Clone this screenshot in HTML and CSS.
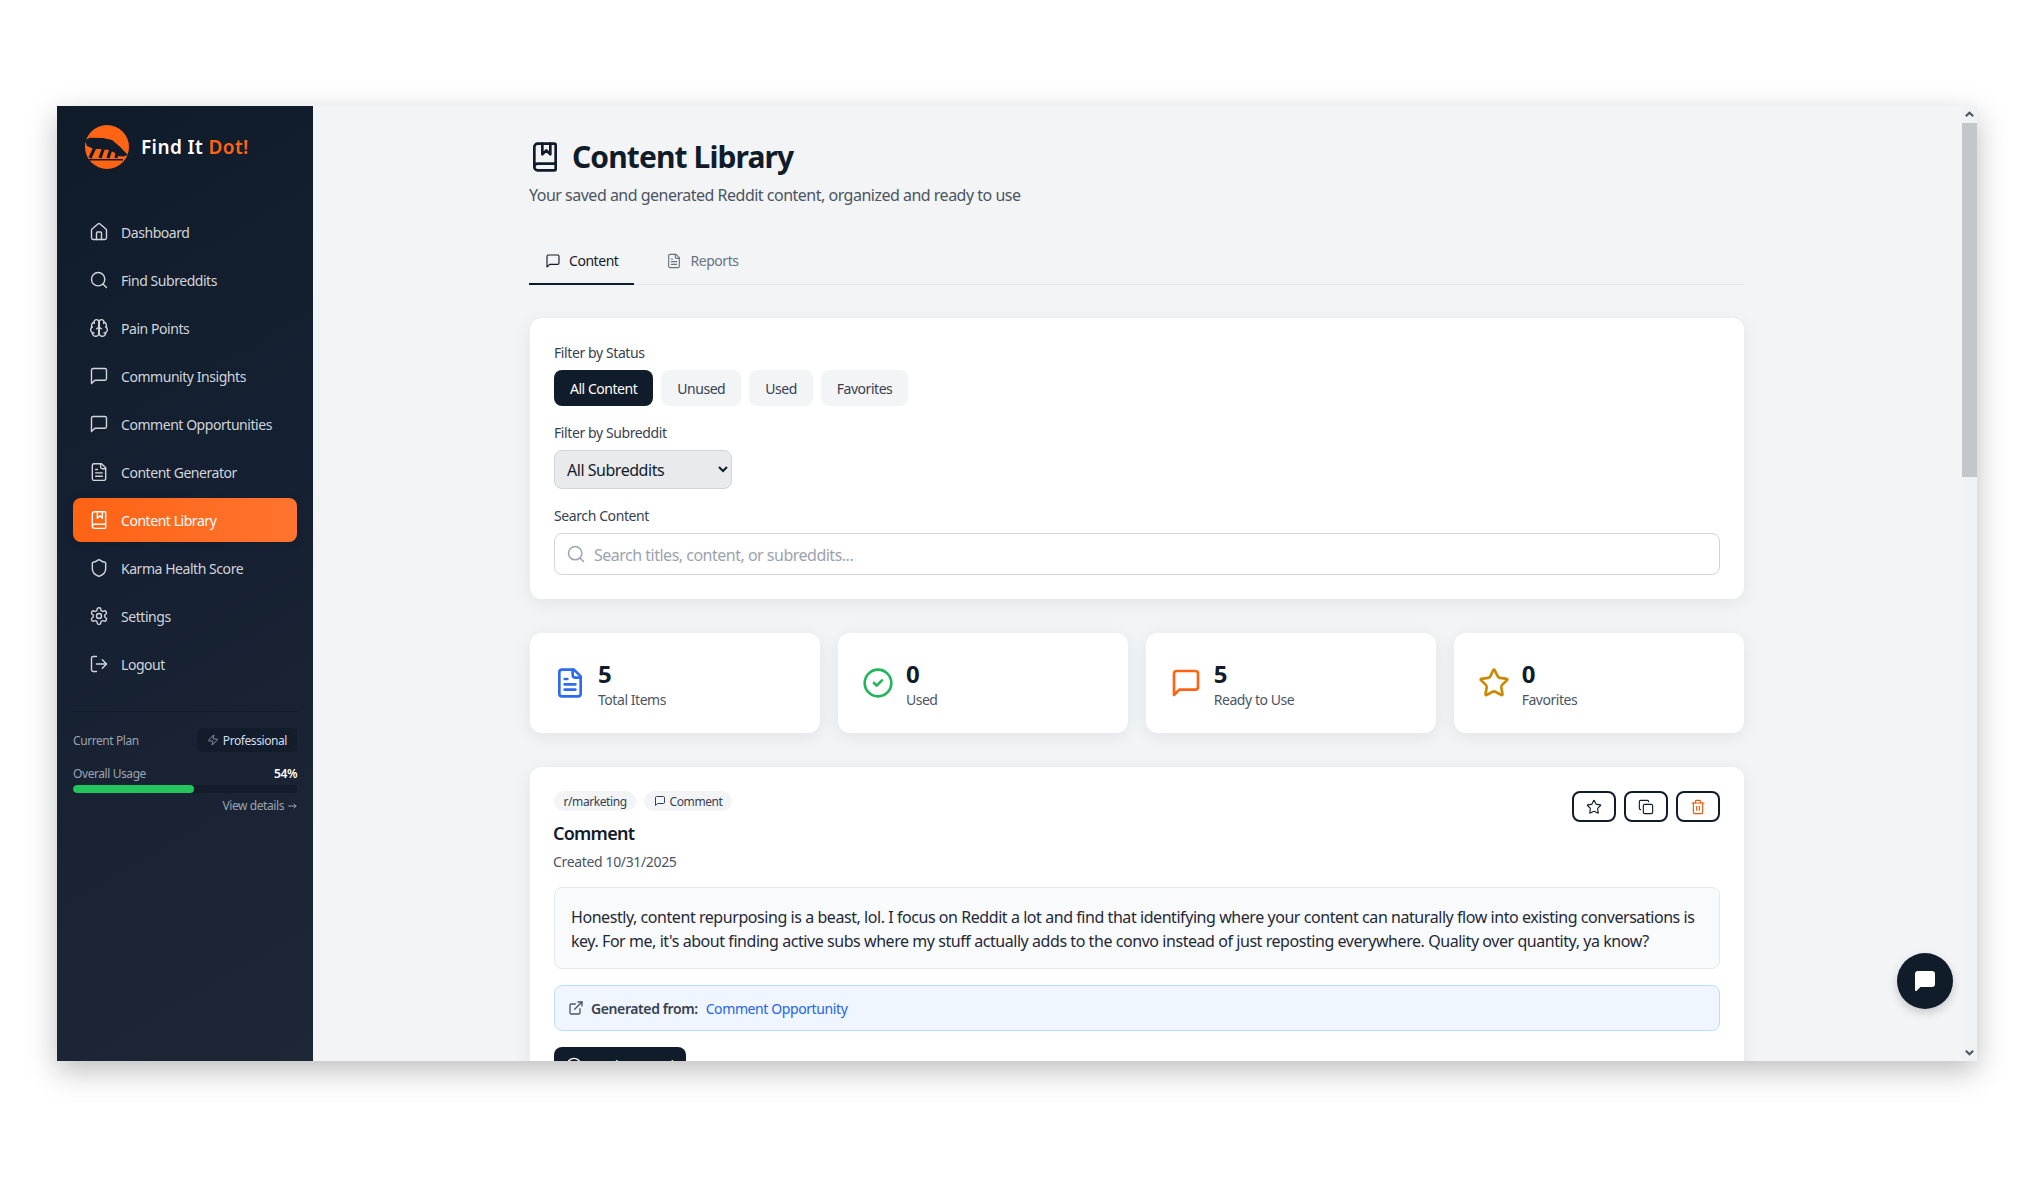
FILE: index.html
```html
<!DOCTYPE html>
<html lang="en">
<head>
    <meta charset="UTF-8">
    <title>Content Library - Find It Dot!</title>
    <link rel="stylesheet" href="styles.css">
</head>
<body>
    <!-- icon sprite -->
    <svg class="sprite" xmlns="http://www.w3.org/2000/svg">
        <symbol id="i-home" viewBox="0 0 24 24"><path d="M15 21v-8a1 1 0 0 0-1-1h-4a1 1 0 0 0-1 1v8"/><path d="M3 10a2 2 0 0 1 .709-1.528l7-5.999a2 2 0 0 1 2.582 0l7 5.999A2 2 0 0 1 21 10v9a2 2 0 0 1-2 2H5a2 2 0 0 1-2-2z"/></symbol>
        <symbol id="i-search" viewBox="0 0 24 24"><circle cx="11" cy="11" r="8"/><path d="m21 21-4.3-4.3"/></symbol>
        <symbol id="i-brain" viewBox="0 0 24 24"><path d="M12 5a3 3 0 1 0-5.997.125 4 4 0 0 0-2.526 5.77 4 4 0 0 0 .556 6.588A4 4 0 1 0 12 18Z"/><path d="M12 5a3 3 0 1 1 5.997.125 4 4 0 0 1 2.526 5.77 4 4 0 0 1-.556 6.588A4 4 0 1 1 12 18Z"/><path d="M15 13a4.5 4.5 0 0 1-3-4 4.5 4.5 0 0 1-3 4"/><path d="M17.599 6.5a3 3 0 0 0 .399-1.375"/><path d="M6.003 5.125A3 3 0 0 0 6.401 6.5"/><path d="M3.477 10.896a4 4 0 0 1 .585-.396"/><path d="M19.938 10.5a4 4 0 0 1 .585.396"/><path d="M6 18a4 4 0 0 1-1.967-.516"/><path d="M19.967 17.484A4 4 0 0 1 18 18"/><path d="M12 18V5"/></symbol>
        <symbol id="i-message" viewBox="0 0 24 24"><path d="M21 15a2 2 0 0 1-2 2H7l-4 4V5a2 2 0 0 1 2-2h14a2 2 0 0 1 2 2z"/></symbol>
        <symbol id="i-file" viewBox="0 0 24 24"><path d="M15 2H6a2 2 0 0 0-2 2v16a2 2 0 0 0 2 2h12a2 2 0 0 0 2-2V7Z"/><path d="M14 2v4a2 2 0 0 0 2 2h4"/><path d="M10 9H8"/><path d="M16 13H8"/><path d="M16 17H8"/></symbol>
        <symbol id="i-book" viewBox="0 0 24 24"><path d="M10 2v8l3-3 3 3V2"/><path d="M4 19.5v-15A2.5 2.5 0 0 1 6.5 2H19a1 1 0 0 1 1 1v18a1 1 0 0 1-1 1H6.5a1 1 0 0 1 0-5H20"/></symbol>
        <symbol id="i-shield" viewBox="0 0 24 24"><path d="M20 13c0 5-3.5 7.5-7.66 8.95a1 1 0 0 1-.67-.01C7.5 20.5 4 18 4 13V6a1 1 0 0 1 1-1c2 0 4.5-1.2 6.24-2.72a1.17 1.17 0 0 1 1.52 0C14.51 3.81 17 5 19 5a1 1 0 0 1 1 1z"/></symbol>
        <symbol id="i-settings" viewBox="0 0 24 24"><path d="M12.22 2h-.44a2 2 0 0 0-2 2v.18a2 2 0 0 1-1 1.73l-.43.25a2 2 0 0 1-2 0l-.15-.08a2 2 0 0 0-2.73.73l-.22.38a2 2 0 0 0 .73 2.73l.15.1a2 2 0 0 1 1 1.72v.51a2 2 0 0 1-1 1.74l-.15.09a2 2 0 0 0-.73 2.73l.22.38a2 2 0 0 0 2.73.73l.15-.08a2 2 0 0 1 2 0l.43.25a2 2 0 0 1 1 1.73V20a2 2 0 0 0 2 2h.44a2 2 0 0 0 2-2v-.18a2 2 0 0 1 1-1.73l.43-.25a2 2 0 0 1 2 0l.15.08a2 2 0 0 0 2.73-.73l.22-.39a2 2 0 0 0-.73-2.73l-.15-.08a2 2 0 0 1-1-1.74v-.5a2 2 0 0 1 1-1.74l.15-.09a2 2 0 0 0 .73-2.73l-.22-.38a2 2 0 0 0-2.73-.73l-.15.08a2 2 0 0 1-2 0l-.43-.25a2 2 0 0 1-1-1.73V4a2 2 0 0 0-2-2z"/><circle cx="12" cy="12" r="3"/></symbol>
        <symbol id="i-logout" viewBox="0 0 24 24"><path d="M9 21H5a2 2 0 0 1-2-2V5a2 2 0 0 1 2-2h4"/><path d="m16 17 5-5-5-5"/><path d="M21 12H9"/></symbol>
        <symbol id="i-zap" viewBox="0 0 24 24"><path d="M4 14a1 1 0 0 1-.78-1.63l9.9-10.2a.5.5 0 0 1 .86.46l-1.92 6.02A1 1 0 0 0 13 10h7a1 1 0 0 1 .78 1.63l-9.9 10.2a.5.5 0 0 1-.86-.46l1.92-6.02A1 1 0 0 0 11 14z"/></symbol>
        <symbol id="i-check" viewBox="0 0 24 24"><circle cx="12" cy="12" r="10"/><path d="m9 12 2 2 4-4"/></symbol>
        <symbol id="i-star" viewBox="0 0 24 24"><path d="M11.525 2.295a.53.53 0 0 1 .95 0l2.31 4.679a2.123 2.123 0 0 0 1.595 1.16l5.166.756a.53.53 0 0 1 .294.904l-3.736 3.638a2.123 2.123 0 0 0-.611 1.878l.882 5.14a.53.53 0 0 1-.771.56l-4.618-2.428a2.122 2.122 0 0 0-1.973 0L6.396 21.01a.53.53 0 0 1-.77-.56l.881-5.139a2.122 2.122 0 0 0-.611-1.879L2.16 9.795a.53.53 0 0 1 .294-.906l5.165-.755a2.122 2.122 0 0 0 1.597-1.16z"/></symbol>
        <symbol id="i-copy" viewBox="0 0 24 24"><rect x="8" y="8" width="14" height="14" rx="2"/><path d="M4 16c-1.1 0-2-.9-2-2V4c0-1.1.9-2 2-2h10c1.1 0 2 .9 2 2"/></symbol>
        <symbol id="i-trash" viewBox="0 0 24 24"><path d="M3 6h18"/><path d="M19 6v14c0 1-1 2-2 2H7c-1 0-2-1-2-2V6"/><path d="M8 6V4c0-1 1-2 2-2h4c1 0 2 1 2 2v2"/><path d="M10 11v6"/><path d="M14 11v6"/></symbol>
        <symbol id="i-external" viewBox="0 0 24 24"><path d="M15 3h6v6"/><path d="M10 14 21 3"/><path d="M18 13v6a2 2 0 0 1-2 2H5a2 2 0 0 1-2-2V8a2 2 0 0 1 2-2h6"/></symbol>
        <symbol id="i-arrow" viewBox="0 0 9 8"><path d="M0.500 4H8M6 2l2 2-2 2"/></symbol>
    </svg>

    <div class="window">
        <!-- sidebar -->
        <aside class="sidebar">
            <div class="brand">
                <svg class="brand-logo" viewBox="0 0 44 44">
                    <circle cx="22" cy="22" r="22" fill="#ff6314"/>
                    <path fill="#111c2b" d="M0 15 L5 12.700 L18 13 L27 15 L35 21.700 L38 25 L43 30 L38 31.500 L33 31 L30 28 L24 25 L15 24 L9 24 L2 21 Z"/>
                    <path fill="none" stroke="#111c2b" stroke-width="3.200" d="M11 20 L5 33 M19 22 L15 33 M26 24 L23 33 M32 27 L31 33"/>
                    <path fill="#111c2b" d="M4 34 H38 V35.500 H4 Z"/>
                </svg>
                <span class="brand-name">Find It <em>Dot!</em></span>
            </div>

            <nav class="menu">
                <a href="#" class="menu-item"><svg class="icon"><use href="#i-home"/></svg>Dashboard</a>
                <a href="#" class="menu-item"><svg class="icon"><use href="#i-search"/></svg>Find Subreddits</a>
                <a href="#" class="menu-item"><svg class="icon"><use href="#i-brain"/></svg>Pain Points</a>
                <a href="#" class="menu-item"><svg class="icon"><use href="#i-message"/></svg>Community Insights</a>
                <a href="#" class="menu-item"><svg class="icon"><use href="#i-message"/></svg>Comment Opportunities</a>
                <a href="#" class="menu-item"><svg class="icon"><use href="#i-file"/></svg>Content Generator</a>
                <a href="#" class="menu-item active"><svg class="icon"><use href="#i-book"/></svg>Content Library</a>
                <a href="#" class="menu-item"><svg class="icon"><use href="#i-shield"/></svg>Karma Health Score</a>
                <a href="#" class="menu-item"><svg class="icon"><use href="#i-settings"/></svg>Settings</a>
                <a href="#" class="menu-item"><svg class="icon"><use href="#i-logout"/></svg>Logout</a>
            </nav>

            <div class="plan">
                <div class="plan-row">
                    <span>Current Plan</span>
                    <span class="plan-badge"><svg class="icon"><use href="#i-zap"/></svg>Professional</span>
                </div>
                <div class="usage-row">
                    <span>Overall Usage</span>
                    <strong>54%</strong>
                </div>
                <div class="usage-bar"><div class="usage-fill" style="width: 54%"></div></div>
                <a href="#" class="usage-link">View details<svg class="icon usage-arrow"><use href="#i-arrow"/></svg></a>
            </div>
        </aside>

        <!-- main content -->
        <main class="main">
            <div class="content">
                <div class="page-title">
                    <svg class="icon"><use href="#i-book"/></svg>
                    <h1>Content Library</h1>
                </div>
                <p class="page-sub">Your saved and generated Reddit content, organized and ready to use</p>

                <div class="tabs">
                    <a href="#" class="tab active"><svg class="icon"><use href="#i-message"/></svg>Content</a>
                    <a href="#" class="tab"><svg class="icon"><use href="#i-file"/></svg>Reports</a>
                </div>

                <!-- filters -->
                <section class="card filters">
                    <label class="field-label">Filter by Status</label>
                    <div class="status-buttons">
                        <button class="status-button active">All Content</button>
                        <button class="status-button">Unused</button>
                        <button class="status-button">Used</button>
                        <button class="status-button">Favorites</button>
                    </div>
                    <label class="field-label">Filter by Subreddit</label>
                    <select class="subreddit-select">
                        <option>All Subreddits</option>
                    </select>
                    <label class="field-label">Search Content</label>
                    <div class="search-box">
                        <svg class="icon"><use href="#i-search"/></svg>
                        <input type="text" placeholder="Search titles, content, or subreddits...">
                    </div>
                </section>

                <!-- stats -->
                <div class="stats">
                    <div class="card stat">
                        <svg class="icon blue"><use href="#i-file"/></svg>
                        <div class="stat-text"><div class="stat-value">5</div><div class="stat-label">Total Items</div></div>
                    </div>
                    <div class="card stat">
                        <svg class="icon green"><use href="#i-check"/></svg>
                        <div class="stat-text"><div class="stat-value">0</div><div class="stat-label">Used</div></div>
                    </div>
                    <div class="card stat">
                        <svg class="icon orange"><use href="#i-message"/></svg>
                        <div class="stat-text"><div class="stat-value">5</div><div class="stat-label">Ready to Use</div></div>
                    </div>
                    <div class="card stat">
                        <svg class="icon yellow"><use href="#i-star"/></svg>
                        <div class="stat-text"><div class="stat-value">0</div><div class="stat-label">Favorites</div></div>
                    </div>
                </div>

                <!-- content item -->
                <article class="card item">
                    <div class="item-head">
                        <div class="chips">
                            <span class="chip">r/marketing</span>
                            <span class="chip"><svg class="icon"><use href="#i-message"/></svg>Comment</span>
                        </div>
                        <div class="item-actions">
                            <button class="icon-button"><svg class="icon"><use href="#i-star"/></svg></button>
                            <button class="icon-button"><svg class="icon"><use href="#i-copy"/></svg></button>
                            <button class="icon-button danger"><svg class="icon"><use href="#i-trash"/></svg></button>
                        </div>
                    </div>
                    <h2 class="item-title">Comment</h2>
                    <div class="item-date">Created 10/31/2025</div>
                    <div class="item-body">Honestly, content repurposing is a beast, lol. I focus on Reddit a lot and find that identifying where your content can naturally flow into existing conversations is key. For me, it's about finding active subs where my stuff actually adds to the convo instead of just reposting everywhere. Quality over quantity, ya know?</div>
                    <div class="item-source">
                        <svg class="icon"><use href="#i-external"/></svg>
                        <strong>Generated from:</strong>
                        <a href="#">Comment Opportunity</a>
                    </div>
                    <button class="mark-button"><svg class="icon"><use href="#i-check"/></svg>Mark as Used</button>
                </article>
            </div>
        </main>

        <!-- scrollbar -->
        <div class="scrollbar">
            <svg class="scroll-arrow" viewBox="0 0 12 12"><path d="M2 8 L6 4 L10 8"/></svg>
            <div class="scroll-thumb"></div>
            <svg class="scroll-arrow down" viewBox="0 0 12 12"><path d="M2 4 L6 8 L10 4"/></svg>
        </div>

        <button class="chat-button">
            <svg viewBox="0 0 24 24"><path d="M21 15a2 2 0 0 1-2 2H7l-4 4V5a2 2 0 0 1 2-2h14a2 2 0 0 1 2 2z"/></svg>
        </button>
    </div>
</body>
</html>
```

FILE: styles.css
```css
* {
    box-sizing: border-box;
}
body {
    margin: 0;
    padding-top: 106px;
    height: 1188px;
    overflow: hidden;
    background: #fff;
    font-family: "Noto Sans", "Open Sans", sans-serif;
    color: #111c2b;
}
a {
    text-decoration: none;
}
button {
    font-family: inherit;
}
.sprite {
    display: none;
}
.icon {
    width: 20px;
    height: 20px;
    flex: none;
    fill: none;
    stroke: currentColor;
    stroke-width: 2;
    stroke-linecap: round;
    stroke-linejoin: round;
}

.window {
    position: relative;
    display: flex;
    width: 1920px;
    height: 955px;
    margin: 0 auto;
    background: #f3f4f6;
    box-shadow: 0 10px 28px rgba(0, 0, 0, 0.26);
    overflow: hidden;
}

/* sidebar */
.sidebar {
    width: 256px;
    flex: none;
    background: linear-gradient(150deg, #101b2a 0%, #152032 45%, #1e2736 100%);
}
.brand {
    display: flex;
    align-items: center;
    gap: 12px;
    padding: 19px 28px 41px;
}
.brand-logo {
    width: 44px;
    height: 44px;
    flex: none;
}
.brand-name {
    font-size: 19px;
    font-weight: 600;
    letter-spacing: 0.4px;
    color: #fff;
}
.brand-name em {
    font-style: normal;
    color: #ff6314;
}
.menu {
    display: flex;
    flex-direction: column;
    gap: 4px;
    padding: 0 16px;
}
.menu-item {
    display: flex;
    align-items: center;
    gap: 12px;
    height: 44px;
    padding: 0 16px;
    border-radius: 8px;
    font-size: 14px;
    letter-spacing: -0.45px;
    color: #d1d5db;
}
.menu-item .icon {
    stroke-width: 1.7;
}
.menu-item.active {
    background: linear-gradient(90deg, #ff6314, #ff7430);
    color: #fff;
    box-shadow: 0 2px 8px rgba(0, 0, 0, 0.12);
}
.plan {
    margin: 25px 16px 0;
    padding-top: 16px;
    border-top: 1px solid #111a28;
    font-size: 12px;
    letter-spacing: -0.42px;
    color: #9ca3af;
}
.plan-row,
.usage-row {
    display: flex;
    align-items: center;
    justify-content: space-between;
}
.plan-badge {
    display: flex;
    align-items: center;
    gap: 4px;
    height: 24px;
    padding: 0 10px;
    border-radius: 6px;
    background: #121c2b;
    color: #d3dcea;
}
.plan-badge .icon {
    width: 12px;
    height: 12px;
    color: #9ca3af;
    stroke-width: 1.7;
}
.usage-row {
    margin-top: 14px;
    line-height: 16px;
}
.usage-row strong {
    color: #fff;
    font-weight: 600;
}
.usage-bar {
    height: 8px;
    margin-top: 3px;
    border-radius: 4px;
    background: #121c2b;
    overflow: hidden;
}
.usage-fill {
    height: 100%;
    border-radius: 4px;
    background: #22c55e;
}
.usage-link {
    display: flex;
    align-items: center;
    justify-content: flex-end;
    gap: 4px;
    margin-top: 5px;
    line-height: 16px;
    color: #9ca3af;
}
.usage-arrow {
    width: 9px;
    height: 8px;
    stroke-width: 1;
}

/* main */
.main {
    flex: 1;
    min-width: 0;
    overflow: hidden;
}
.content {
    width: 1214px;
    margin-left: 217px;
    padding-top: 33px;
}
.page-title {
    display: flex;
    align-items: center;
    gap: 12px;
    margin-left: -1px;
}
.page-title .icon {
    width: 32px;
    height: 32px;
}
.page-title h1 {
    margin: 0 0 0 -1px;
    font-size: 30px;
    line-height: 36px;
    font-weight: 700;
    letter-spacing: -0.9px;
}
.page-sub {
    margin: 8px 0 0 -1px;
    font-size: 16px;
    line-height: 24px;
    letter-spacing: -0.5px;
    color: #4b5563;
}
.tabs {
    display: flex;
    gap: 16px;
    margin-top: 31px;
    border-bottom: 1px solid #e5e7eb;
}
.tab {
    display: flex;
    align-items: center;
    gap: 8px;
    height: 47px;
    margin-bottom: -1px;
    padding: 0 16px;
    border-bottom: 2px solid transparent;
    font-size: 14px;
    letter-spacing: -0.45px;
    color: #6b7280;
}
.tab:first-child {
    margin-left: -1px;
}
.tab .icon {
    width: 16px;
    height: 16px;
    stroke-width: 1.7;
}
.tab.active {
    border-bottom-color: #111c2b;
    color: #111c2b;
}
.card {
    background: #fff;
    border-radius: 12px;
    box-shadow: 0 4px 18px rgba(0, 0, 0, 0.07);
}

/* filters */
.filters {
    margin-top: 33px;
    padding: 24px;
}
.field-label {
    display: block;
    margin-bottom: 7px;
    padding-top: 1px;
    font-size: 14px;
    line-height: 20px;
    letter-spacing: -0.4px;
    color: #374151;
}
.status-buttons {
    display: flex;
    gap: 8px;
    margin-bottom: 16px;
}
.status-button {
    height: 36px;
    padding: 0 16px;
    border: none;
    border-radius: 8px;
    background: #f3f4f6;
    font-size: 14px;
    letter-spacing: -0.47px;
    color: #374151;
}
.status-button.active {
    background: #111c2b;
    color: #fff;
}
.subreddit-select {
    display: block;
    width: 178px;
    height: 39px;
    margin-bottom: 16px;
    padding: 0 8px;
    border: 1px solid #d1d5db;
    border-radius: 8px;
    background: #e9eaec;
    font-family: inherit;
    font-size: 16px;
    letter-spacing: -0.47px;
    color: #111c2b;
}
.search-box {
    display: flex;
    align-items: center;
    gap: 8px;
    height: 42px;
    padding: 0 11px;
    border: 1px solid #d1d5db;
    border-radius: 8px;
}
.search-box .icon {
    color: #9ca3af;
    stroke-width: 1.8;
}
.search-box input {
    flex: 1;
    border: none;
    outline: none;
    padding: 2px 0 0;
    font-family: inherit;
    font-size: 16px;
    letter-spacing: -0.5px;
}
.search-box input::placeholder {
    color: #9ca3af;
    opacity: 1;
}

/* stats */
.stats {
    display: grid;
    grid-template-columns: repeat(4, 1fr);
    gap: 17.500px;
    margin-top: 34px;
}
.stat {
    display: flex;
    align-items: center;
    gap: 12px;
    height: 100px;
    padding: 0 24px;
}
.stat .icon {
    width: 32px;
    height: 32px;
}
.stat-text {
    padding-top: 2px;
}
.blue { color: #2f6bf0; }
.green { color: #22b55e; }
.orange { color: #ff6314; }
.yellow { color: #ca8a04; }
.stat-value {
    font-size: 24px;
    line-height: 32px;
    font-weight: 700;
}
.stat-label {
    font-size: 14px;
    line-height: 20px;
    letter-spacing: -0.45px;
    color: #4b5563;
}

/* content item */
.item {
    height: 320px;
    margin-top: 34px;
    padding: 24px;
}
.item-head {
    display: flex;
    justify-content: space-between;
    align-items: flex-start;
    height: 29px;
}
.chips {
    display: flex;
    gap: 8px;
}
.chip {
    display: flex;
    align-items: center;
    gap: 4px;
    height: 20px;
    padding: 0 9.500px;
    border-radius: 10px;
    background: #f3f4f6;
    font-size: 12px;
    letter-spacing: -0.42px;
    color: #374151;
}
.chip .icon {
    width: 12px;
    height: 12px;
}
.item-actions {
    display: flex;
    gap: 8px;
}
.icon-button {
    display: flex;
    align-items: center;
    justify-content: center;
    width: 44px;
    height: 31px;
    padding: 0;
    border: 2px solid #111c2b;
    border-radius: 8px;
    background: #fff;
    color: #111c2b;
}
.icon-button .icon {
    width: 16px;
    height: 16px;
    stroke-width: 1.7;
}
.icon-button.danger {
    color: #ea580c;
}
.item-title {
    margin: -1px 0 0 -1px;
    font-size: 18px;
    line-height: 28px;
    font-weight: 600;
    letter-spacing: -0.75px;
}
.item-date {
    margin: 5px 0 0 -1px;
    font-size: 14px;
    line-height: 20px;
    letter-spacing: -0.35px;
    color: #4b5563;
}
.item-body {
    margin-top: 15px;
    padding: 17px 16px 15px;
    border: 1px solid #e5e7eb;
    border-radius: 8px;
    background: #f9fafb;
    font-size: 16px;
    line-height: 24px;
    letter-spacing: -0.44px;
    color: #1f2937;
}
.item-source {
    display: flex;
    align-items: center;
    height: 46px;
    margin-top: 16px;
    padding: 0 13px;
    border: 1px solid #bfdbfe;
    border-radius: 8px;
    background: #eff6ff;
    font-size: 14px;
    letter-spacing: -0.4px;
    color: #374151;
}
.item-source .icon {
    width: 16px;
    height: 16px;
    margin-right: 7px;
    color: #4b5563;
}
.item-source strong {
    margin-right: 8px;
    font-weight: 600;
}
.item-source a {
    color: #2563eb;
}
.mark-button {
    display: flex;
    align-items: center;
    gap: 8px;
    height: 36px;
    margin-top: 16px;
    padding: 0 12px;
    border: none;
    border-radius: 8px;
    background: #111c2b;
    font-size: 14px;
    letter-spacing: -0.45px;
    color: #fff;
}
.mark-button .icon {
    width: 16px;
    height: 16px;
}

/* scrollbar */
.scrollbar {
    display: flex;
    flex-direction: column;
    width: 15px;
    flex: none;
    background: #f1f2f4;
}
.scroll-arrow {
    width: 15px;
    height: 17px;
    flex: none;
    padding: 2px;
    fill: none;
    stroke: #4b5563;
    stroke-width: 2.200;
}
.scroll-thumb {
    height: 354px;
    background: #c5c6c9;
}
.scroll-arrow.down {
    margin-top: auto;
}

/* chat */
.chat-button {
    position: absolute;
    right: 24px;
    bottom: 52px;
    display: flex;
    align-items: center;
    justify-content: center;
    width: 56px;
    height: 56px;
    padding: 0;
    border: none;
    border-radius: 50%;
    background: #111c2b;
    box-shadow: 0 4px 10px rgba(0, 0, 0, 0.18);
}
.chat-button svg {
    width: 24px;
    height: 24px;
    fill: #fff;
    stroke: #fff;
    stroke-width: 2;
    stroke-linejoin: round;
}
```
